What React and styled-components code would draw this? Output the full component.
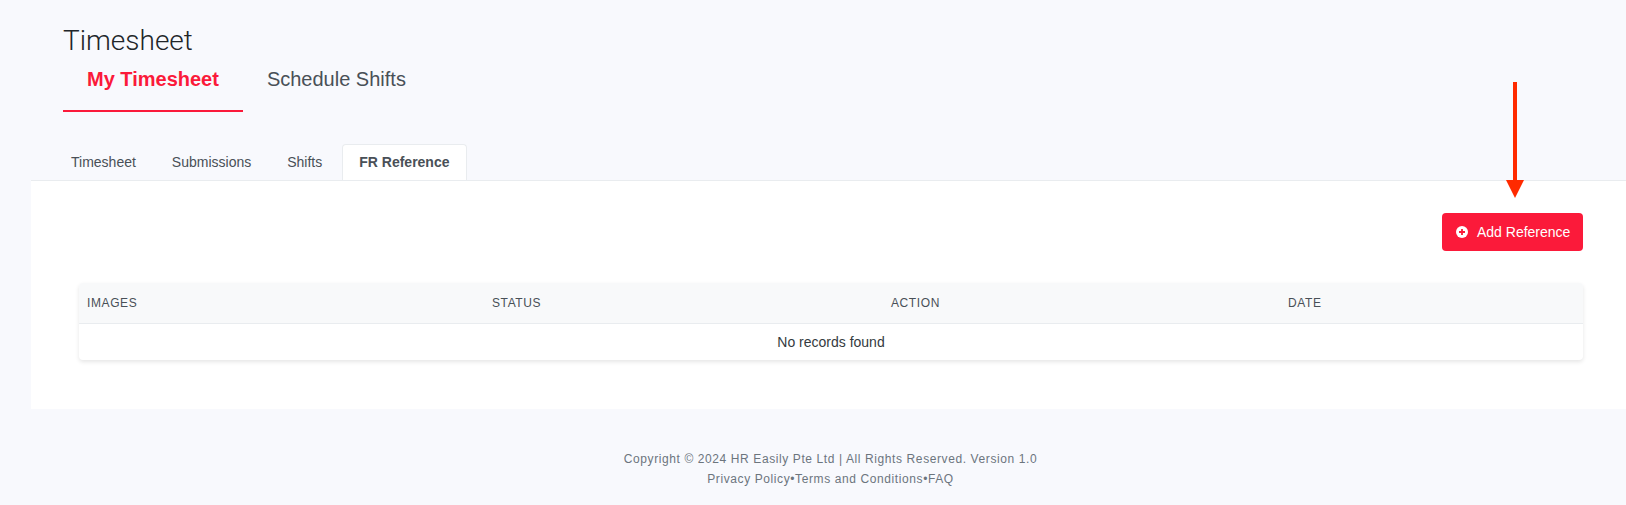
import styled, { createGlobalStyle } from "styled-components";

const GlobalStyle = createGlobalStyle`
  html, body {
    margin: 0;
    padding: 0;
    background: #f8f9fd;
    font-family: "Liberation Sans", Arial, sans-serif;
  }
`;

const columns = [
  { label: "IMAGES" },
  { label: "STATUS" },
  { label: "ACTION" },
  { label: "DATE" },
];

const App = () => {
  return (
    <Page>
      <GlobalStyle />
      <Header>
        <Title>Timesheet</Title>
        <MainTabs>
          <MainTab $active>My Timesheet</MainTab>
          <MainTab>Schedule Shifts</MainTab>
        </MainTabs>
      </Header>

      <SubTabs>
        <SubTab>Timesheet</SubTab>
        <SubTab>Submissions</SubTab>
        <SubTab>Shifts</SubTab>
        <SubTab $active>FR Reference</SubTab>
      </SubTabs>

      <Panel>
        <Actions>
          <AddButton>
            <svg width="12" height="12" viewBox="0 0 12 12">
              <circle cx="6" cy="6" r="6" fill="#fff" />
              <path d="M6 3v6M3 6h6" stroke="#fb1a3a" strokeWidth="1.8" />
            </svg>
            Add Reference
          </AddButton>
        </Actions>
        <Table>
          <HeadRow>
            {columns.map((col) => (
              <HeadCell key={col.label}>{col.label}</HeadCell>
            ))}
          </HeadRow>
          <EmptyRow>No records found</EmptyRow>
        </Table>
      </Panel>

      <Footer>
        <FooterLine>
          Copyright © 2024 HR Easily Pte Ltd | All Rights Reserved. Version 1.0
        </FooterLine>
        <FooterLine>Privacy Policy•Terms and Conditions•FAQ</FooterLine>
      </Footer>

      <Arrow width="18" height="116" viewBox="0 0 18 116">
        <rect x="7" y="0" width="4" height="100" fill="#ff2a00" />
        <polygon points="0,98 18,98 9,116" fill="#ff2a00" />
      </Arrow>
    </Page>
  );
};

const Page = styled.div`
  position: relative;
  width: 1626px;
  height: 505px;
  overflow: hidden;
`;

const Header = styled.div`
  padding: 25px 0 0 63px;
`;

const Title = styled.h1`
  margin: 0;
  height: 31px;
  font-family: Roboto, "Liberation Sans", sans-serif;
  font-size: 28px;
  line-height: 31px;
  font-weight: 300;
  color: #212529;
`;

const MainTabs = styled.div`
  display: flex;
`;

const MainTab = styled.div`
  padding: 0 24px;
  height: 56px;
  line-height: 47px;
  font-size: 20px;
  box-sizing: border-box;
  font-weight: ${(p) => (p.$active ? 700 : 400)};
  color: ${(p) => (p.$active ? "#fb1a3a" : "#495057")};
  border-bottom: 2px solid ${(p) => (p.$active ? "#fb1a3a" : "transparent")};
`;

const SubTabs = styled.div`
  display: flex;
  align-items: flex-end;
  margin-top: 32px;
  margin-left: 31px;
  padding-left: 22px;
  height: 36px;
  box-sizing: border-box;
`;

const SubTab = styled.div`
  box-sizing: border-box;
  height: 36px;
  line-height: 35px;
  padding: 0 ${(p) => (p.$active ? "16px" : "17px")};
  margin-left: ${(p) => (p.$active ? "2px" : "0")};
  font-size: 14px;
  font-weight: ${(p) => (p.$active ? 700 : 400)};
  color: #495057;
  background: ${(p) => (p.$active ? "#fff" : "transparent")};
  border: 1px solid ${(p) => (p.$active ? "#e9ecef" : "transparent")};
  border-bottom: none;
  border-radius: 4px 4px 0 0;
`;

const Panel = styled.div`
  margin-left: 31px;
  height: 229px;
  box-sizing: border-box;
  background: #fff;
  border-top: 1px solid #e9ecef;
  padding: 32px 43px 0 48px;
`;

const Actions = styled.div`
  display: flex;
  justify-content: flex-end;
`;

const AddButton = styled.button`
  display: flex;
  align-items: center;
  gap: 9px;
  width: 141px;
  height: 38px;
  padding: 0 0 0 14px;
  border: none;
  border-radius: 4px;
  background: #fb1a3a;
  color: #fff;
  font-family: inherit;
  font-size: 14px;
`;

const Table = styled.div`
  margin-top: 32px;
  border-radius: 4px;
  background: #fff;
  box-shadow: 0 2px 4px rgba(0, 0, 0, 0.1);
`;

const HeadRow = styled.div`
  display: grid;
  grid-template-columns: 405px 399px 397px 303px;
  height: 41px;
  box-sizing: border-box;
  background: #f8f9fa;
  border-bottom: 1px solid #e9ecef;
  border-radius: 4px 4px 0 0;
`;

const HeadCell = styled.div`
  padding-left: 8px;
  line-height: 41px;
  font-size: 12px;
  letter-spacing: 0.6px;
  color: #495057;
`;

const EmptyRow = styled.div`
  height: 36px;
  line-height: 36px;
  text-align: center;
  font-size: 14px;
  color: #343a40;
`;

const Footer = styled.div`
  margin-left: 31px;
  padding: 40px 0 0 4px;
  text-align: center;
`;

const FooterLine = styled.div`
  height: 20px;
  line-height: 20px;
  font-size: 12px;
  letter-spacing: 0.6px;
  color: #6c757d;
`;

const Arrow = styled.svg`
  position: absolute;
  left: 1506px;
  top: 82px;
`;

export default App;
